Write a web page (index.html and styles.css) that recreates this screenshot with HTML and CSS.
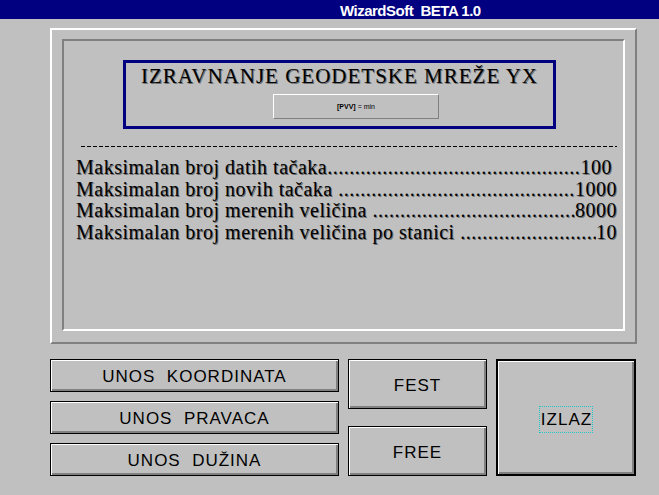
FILE: index.html
```html
<!DOCTYPE html>
<html lang="sr">
<head>
<meta charset="utf-8">
<title>WizardSoft BETA 1.0</title>
<link rel="stylesheet" href="styles.css">
</head>
<body>
<header class="titlebar">WizardSoft&nbsp; BETA 1.0</header>
<main class="main">
  <section class="panel">
    <div class="panel-inner">
      <div class="header">
        <h1 class="header-title">IZRAVNANJE GEODETSKE MREŽE YX</h1>
        <div class="formula"><b>[PVV]</b> = min</div>
      </div>
      <div class="dashes"></div>
      <ul class="limits">
        <li class="limit limit-short"><span class="label">Maksimalan broj datih tačaka</span><span class="dots"></span><span class="value">100</span></li>
        <li class="limit"><span class="label">Maksimalan broj novih tačaka&nbsp;</span><span class="dots"></span><span class="value">1000</span></li>
        <li class="limit"><span class="label">Maksimalan broj merenih veličina&nbsp;</span><span class="dots"></span><span class="value">8000</span></li>
        <li class="limit"><span class="label">Maksimalan broj merenih veličina po stanici&nbsp;</span><span class="dots"></span><span class="value">10</span></li>
      </ul>
    </div>
  </section>
  <div class="actions">
    <div class="col col-left">
      <button class="btn btn-row">UNOS&nbsp; KOORDINATA</button>
      <button class="btn btn-row">UNOS&nbsp; PRAVACA</button>
      <button class="btn btn-row">UNOS&nbsp; DUŽINA</button>
    </div>
    <div class="col col-mid">
      <button class="btn btn-mid">FEST</button>
      <button class="btn btn-mid">FREE</button>
    </div>
    <button class="btn btn-default"><span class="focus">IZLAZ</span></button>
  </div>
</main>
</body>
</html>
```
FILE: styles.css
```css
html, body {
  margin: 0;
  padding: 0;
  background: #c0c0c0;
}
body {
  width: 659px;
  height: 495px;
  overflow: hidden;
  font-family: "Liberation Sans", Arial, sans-serif;
}
.titlebar {
  box-sizing: border-box;
  height: 19px;
  background: #000080;
  color: #fff;
  font-weight: bold;
  font-size: 15px;
  letter-spacing: -0.5px;
  line-height: 16px;
  padding: 3px 0 0 340px;
  white-space: nowrap;
}
.main {
  padding: 9px 0 0 50px;
}
.panel {
  box-sizing: border-box;
  width: 587px;
  height: 316px;
  border: 2px solid;
  border-color: #fff #808080 #808080 #fff;
  padding: 9px 10px 11px 10px;
}
.panel-inner {
  box-sizing: border-box;
  height: 100%;
  border: 2px solid;
  border-color: #808080 #fff #fff #808080;
  padding-top: 19px;
}
.header {
  box-sizing: border-box;
  margin-left: 59px;
  width: 433px;
  height: 69px;
  border: 3px solid #000080;
  padding-top: 2px;
}
.header-title {
  margin: 0;
  font-family: "Liberation Serif", "Times New Roman", serif;
  font-weight: normal;
  font-size: 21px;
  line-height: 23px;
  letter-spacing: 1px;
  text-align: center;
  color: #000;
  text-shadow: 1px 1px 0 #707070;
  white-space: nowrap;
}
.formula {
  box-sizing: border-box;
  margin: 6px 0 0 147px;
  width: 166px;
  height: 25px;
  border: 1px solid;
  border-color: #fff #808080 #808080 #fff;
  font-size: 7px;
  line-height: 23px;
  text-align: center;
  color: #000;
}
.dashes {
  margin: 17px 0 0 17px;
  width: 536px;
  height: 1px;
  background: repeating-linear-gradient(90deg, #000 0 4px, transparent 4px 6px);
}
.limits {
  list-style: none;
  margin: 10px 6px 0 12px;
  padding: 0;
  font-family: "Liberation Serif", "Times New Roman", serif;
  font-size: 20px;
  line-height: 21.7px;
  letter-spacing: 0.5px;
  color: #000;
  text-shadow: 1px 1px 0 #707070;
}
.limit {
  display: flex;
  white-space: nowrap;
}
.limit-short {
  margin-right: 5px;
}
.label {
  flex: none;
}
.dots {
  flex: 1;
  overflow: hidden;
  min-width: 0;
}
.dots::before {
  content: "....................................................................................................................";
}
.value {
  flex: none;
}
.actions {
  display: flex;
  gap: 9px;
  margin-top: 15px;
}
.col {
  display: flex;
  flex-direction: column;
  justify-content: space-between;
  height: 117px;
}
.col-left {
  width: 289px;
}
.col-mid {
  width: 139px;
}
.btn {
  box-sizing: border-box;
  margin: 0;
  padding: 0;
  font-family: "Liberation Sans", Arial, sans-serif;
  font-size: 17px;
  letter-spacing: 1px;
  color: #000;
  background: #c0c0c0;
  border: 1px solid #000;
  box-shadow: inset 1px 1px 0 #fff, inset -2px -2px 0 #808080;
  cursor: default;
  -webkit-appearance: none;
  appearance: none;
}
.btn-row {
  height: 33px;
  padding-top: 3px;
}
.btn-mid {
  height: 50px;
  padding-top: 4px;
}
.btn-default {
  width: 140px;
  height: 117px;
  border: 2px solid #000;
}
.focus {
  display: inline-block;
  border: 1px dotted #20c8c8;
  padding: 3px 0 2px 1px;
  margin-top: 3px;
}
```
